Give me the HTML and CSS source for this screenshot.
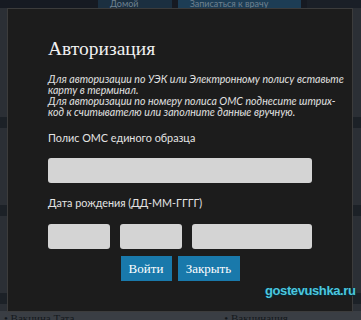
FILE: index.html
```html
<!DOCTYPE html>
<html lang="ru">
  <head>
    <meta charset="UTF-8" />
    <meta name="viewport" content="width=device-width, initial-scale=1.0" />
    <title>Авторизация</title>
    <link rel="stylesheet" href="styles.css">
  </head>
  <body>
    <div class="page">
      <!-- header of the terminal page behind the dialog -->
      <div class="topbar">
        <span class="tab tab-home">Домой</span>
        <span class="tab tab-doc">Записаться к врачу</span>
        <span class="tab tab-dark"></span>
      </div>
      <div class="list">
        <div class="row"></div>
        <div class="row"></div>
        <div class="row"></div>
      </div>
      <div class="bottom">
        <span>• Вакцина Тата</span>
        <span>• Вакцинация</span>
      </div>
    </div>

    <!-- the login dialog -->
    <form class="modal" onsubmit="return false">
      <h2 class="modal-title">Авторизация</h2>
      <p class="hint">
        Для авторизации по УЭК или Электронному полису вставьте<br />
        карту в терминал.<br />
        Для авторизации по номеру полиса ОМС поднесите штрих-<br />
        код к считывателю или заполните данные вручную.
      </p>
      <label class="field-label" for="polis">Полис ОМС единого образца</label>
      <input class="field" id="polis" type="text" />
      <label class="field-label" for="day">Дата рождения (ДД-ММ-ГГГГ)</label>
      <div class="date-row">
        <input class="field small" id="day" type="text" />
        <input class="field small" type="text" />
        <input class="field year" type="text" />
      </div>
      <div class="actions">
        <button class="btn" type="submit">Войти</button>
        <button class="btn" type="button">Закрыть</button>
      </div>
    </form>

    <div class="watermark">gostevushka.ru</div>
  </body>
</html>
```

FILE: styles.css
```css
body {
  margin: 0;
  width: 361px;
  height: 320px;
  overflow: hidden;
  position: relative;
  font-family: Lato, "Open Sans", sans-serif;
  background: #2b2f35;
}

/* Page behind the dialog */
.page {
  display: flex;
  flex-direction: column;
  height: 320px;
}

.topbar {
  display: flex;
  gap: 6px;
  height: 8px;
  padding-left: 98px;
  background: #161a22;
  overflow: hidden;
}

.tab {
  font-size: 9px;
  line-height: 8px;
  color: #6f8190;
  padding: 0 12px;
  white-space: nowrap;
}

.tab-home {
  width: 50px;
  background: #1b2f40;
}

.tab-doc {
  width: 100px;
  background: #1d3d55;
}

.tab-dark {
  width: 30px;
  background: #1a1f27;
}

.list {
  flex: 1;
  display: flex;
  flex-direction: column;
  padding-top: 109px;
  gap: 77px;
}

.row {
  height: 11px;
  background: #1c2127;
}

.bottom {
  display: flex;
  gap: 150px;
  height: 9px;
  padding-left: 4px;
  background: #3a3e44;
  font-family: "Liberation Serif", serif;
  font-size: 11px;
  line-height: 14px;
  color: #15191d;
  overflow: hidden;
}

/* Dialog */
.modal {
  position: absolute;
  left: 7px;
  top: 8px;
  width: 264px;
  height: 274px;
  padding: 28px 40px 0 40px;
  border: 1px solid #3c3c3c;
  background: #1c1c1c;
  margin: 0;
}

.modal-title {
  margin: 0;
  font-family: "Liberation Serif", "DejaVu Serif", serif;
  font-weight: normal;
  font-size: 19.5px;
  line-height: 24px;
  color: #f0f0f0;
}

.hint {
  margin: 13px 0 0;
  font-style: italic;
  font-size: 10.6px;
  line-height: 11px;
  color: #e0e0e0;
  white-space: nowrap;
}

.field-label {
  display: block;
  margin-top: 13px;
  font-size: 10.8px;
  line-height: 14px;
  color: #e4e4e4;
}

.field {
  display: block;
  box-sizing: border-box;
  width: 264px;
  height: 25px;
  margin-top: 13px;
  border: none;
  border-radius: 3px;
  background: #d4d4d4;
}

.date-row {
  display: flex;
  gap: 10px;
  margin-top: 14px;
}

.date-row .field {
  margin-top: 0;
}

.field.small {
  width: 62px;
}

.field.year {
  width: 120px;
}

.actions {
  display: flex;
  justify-content: center;
  gap: 6px;
  margin-top: 7px;
}

.btn {
  height: 25px;
  padding: 0 6px;
  border: none;
  background: #1979ab;
  color: #ffffff;
  font-family: "Liberation Serif", "DejaVu Serif", serif;
  font-size: 13px;
}

.btn:first-child {
  width: 51px;
}

.btn:last-child {
  width: 62px;
}

/* Watermark over the screenshot */
.watermark {
  position: absolute;
  left: 265px;
  top: 283px;
  font-family: "Liberation Sans", sans-serif;
  font-weight: bold;
  font-size: 13px;
  letter-spacing: -0.4px;
  color: #4cc6de;
  text-shadow: 1px 1px 1px #0b2a36, -1px 0 1px #0b2a36;
}
```
